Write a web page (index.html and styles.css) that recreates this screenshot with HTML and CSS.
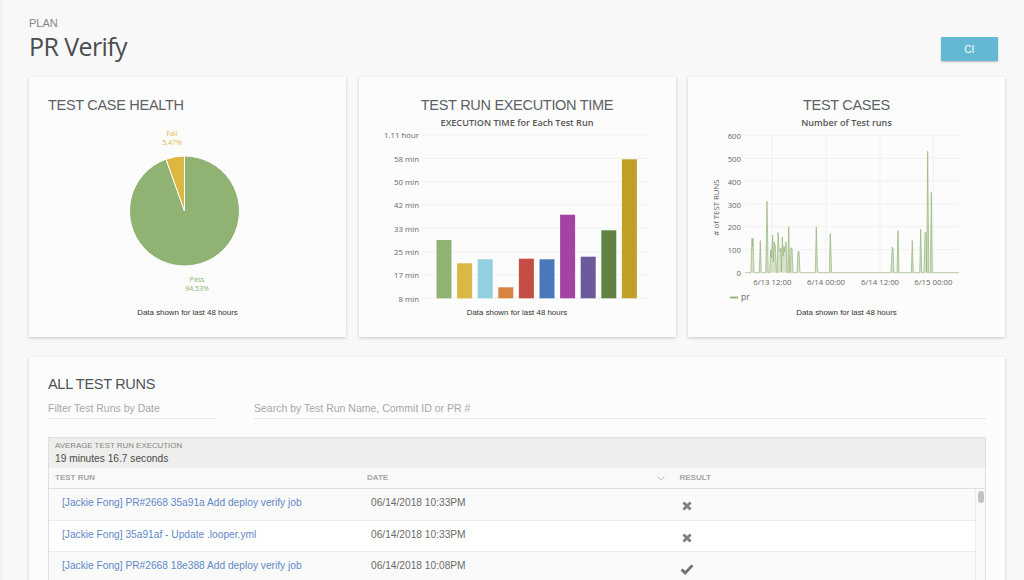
FILE: index.html
```html
<!DOCTYPE html>
<html lang="en">
<head>
<meta charset="utf-8">
<title>PR Verify</title>
<link rel="stylesheet" href="styles.css">
</head>
<body>
<main class="page">
  <header class="page-head">
    <div class="head-text">
      <div class="eyebrow">PLAN</div>
      <h1 class="page-title">PR Verify</h1>
    </div>
    <button class="ci-btn" type="button">CI</button>
  </header>

  <section class="chart-row">
    <article class="card">
      <h2 class="card-title card-title-left">TEST CASE HEALTH</h2>
      <svg class="chart" viewBox="29 115 317 190" width="317" height="190">
        <text class="pie-label fail" x="172" y="135.5">Fail</text>
        <text class="pie-label fail" x="172" y="144.5">5.47%</text>
        <path d="M184.5 211 L184.5 156 A55 55 0 1 1 166 159.2 Z" fill="#90b272" stroke="#fff" stroke-width="1"/>
        <path d="M184.5 211 L166 159.2 A55 55 0 0 1 184.5 156 Z" fill="#ddb743" stroke="#fff" stroke-width="1"/>
        <text class="pie-label pass" x="197" y="282">Pass</text>
        <text class="pie-label pass" x="197" y="291">94.53%</text>
      </svg>
      <p class="caption">Data shown for last 48 hours</p>
    </article>

    <article class="card">
      <h2 class="card-title">TEST RUN EXECUTION TIME</h2>
      <svg class="chart" viewBox="359 115 317 190" width="317" height="190">
        <text class="chart-sub" x="517" y="126">EXECUTION TIME for Each Test Run</text>
        <g class="grid">
          <path d="M422 135H650M422 158.3H650M422 181.7H650M422 205H650M422 228.3H650M422 251.7H650M422 275H650M422 298.3H650"/>
        </g>
        <g class="axis-y">
          <text x="419" y="138">1.11 hour</text>
          <text x="419" y="161.5">58 min</text>
          <text x="419" y="185">50 min</text>
          <text x="419" y="208">42 min</text>
          <text x="419" y="231.5">33 min</text>
          <text x="419" y="255">25 min</text>
          <text x="419" y="278">17 min</text>
          <text x="419" y="301.5">8 min</text>
        </g>
        <g class="bars">
          <rect x="436.5" y="240" width="15" height="58.3" fill="#90b272"/>
          <rect x="457.1" y="263.3" width="15" height="35" fill="#ddb743"/>
          <rect x="477.7" y="259.3" width="15" height="39" fill="#92cfdf"/>
          <rect x="498.3" y="287.3" width="15" height="11" fill="#d98341"/>
          <rect x="518.9" y="258.7" width="15" height="39.6" fill="#c44e45"/>
          <rect x="539.5" y="259.3" width="15" height="39" fill="#4a78bd"/>
          <rect x="560.1" y="214.7" width="15" height="83.6" fill="#a344a3"/>
          <rect x="580.7" y="256.7" width="15" height="41.6" fill="#6b5b9a"/>
          <rect x="601.3" y="230.3" width="15" height="68" fill="#618245"/>
          <rect x="621.9" y="159.3" width="15" height="139" fill="#bfa024"/>
        </g>
      </svg>
      <p class="caption">Data shown for last 48 hours</p>
    </article>

    <article class="card">
      <h2 class="card-title">TEST CASES</h2>
      <svg class="chart" viewBox="688 115 317 190" width="317" height="190">
        <text class="chart-sub" x="846.5" y="126">Number of Test runs</text>
        <g class="grid">
          <path d="M745 135.3H959M745 158.3H959M745 181H959M745 204H959M745 226.7H959M745 249.7H959M772.3 135V272.7M826 135V272.7M880 135V272.7M933.3 135V272.7"/>
        </g>
        <g class="axis-y">
          <text x="741" y="138.5">600</text>
          <text x="741" y="161.5">500</text>
          <text x="741" y="184.5">400</text>
          <text x="741" y="207.5">300</text>
          <text x="741" y="230">200</text>
          <text x="741" y="253">100</text>
          <text x="741" y="276">0</text>
        </g>
        <text class="axis-title" transform="translate(719 207.5) rotate(-90)">
          # of TEST RUNS
        </text>
        <polyline class="spikes" points="745,272.7 750.8,272.7 752,238.3 752.4,246.4 753,238.5 754,272.7 759.3,272.7 760.3,240.6 761.3,272.7 765.8,272.7 767,201.2 768.2,272.7 769.8,272.7 770.7,249.8 771.4,258 772.6,234.9 773.4,262 774,241.8 775.3,245.2 776.4,272.7 777.2,272.7 778,232.6 779.3,250.9 780.2,252 780.9,248 781.4,272 782.3,237.2 783.2,256 783.9,246.4 784.7,252 786,241.8 787.2,272.7 787.8,272.7 788.7,226.9 789.8,272.7 790.2,272.7 791,248 792,248 793,272.7 797,272.7 798,251.6 799,251.6 800,272.7 815.3,272.7 816.3,226.9 817.4,268 818.4,272.7 829.3,272.7 830.3,233.8 831.6,272.7 891,272.7 892.3,247 893,248.7 894,272.7 897,272.7 898,230.8 899,272.7 911.3,272.7 912.3,240.6 913.3,272.7 919.7,272.7 920.7,229.2 921.7,272.7 924,272.7 925,232.6 926.2,232.6 926.6,272.7 927.7,151.3 928.8,272.7 930.3,272.7 931.3,192.5 932.3,272.7 959,272.7"/>
        <g class="axis-x">
          <text x="772.3" y="285">6/13 12:00</text>
          <text x="826" y="285">6/14 00:00</text>
          <text x="880" y="285">6/14 12:00</text>
          <text x="933.3" y="285">6/15 00:00</text>
        </g>
        <path class="legend-line" d="M730 297.5H738"/>
        <text class="legend-text" x="741" y="300">pr</text>
      </svg>
      <p class="caption">Data shown for last 48 hours</p>
    </article>
  </section>

  <section class="card runs">
    <h2 class="card-title card-title-left runs-title">ALL TEST RUNS</h2>
    <div class="filters">
      <div class="field field-date">Filter Test Runs by Date</div>
      <div class="field field-search">Search by Test Run Name, Commit ID or PR #</div>
    </div>
    <div class="table">
      <div class="avg">
        <div class="avg-label">AVERAGE TEST RUN EXECUTION</div>
        <div class="avg-value">19 minutes 16.7 seconds</div>
      </div>
      <div class="thead">
        <div class="th th-run">TEST RUN</div>
        <div class="th th-date">DATE
          <svg class="chevron" viewBox="0 0 8 5" width="8" height="5"><path d="M0.5 0.5L4 4L7.5 0.5"/></svg>
        </div>
        <div class="th th-result">RESULT</div>
      </div>
      <div class="tbody">
        <div class="rows">
          <div class="row">
            <a class="run-link" href="#">[Jackie Fong] PR#2668 35a91a Add deploy verify job</a>
            <span class="run-date">06/14/2018 10:33PM</span>
            <svg class="result" viewBox="0 0 14 14" width="14" height="14"><path class="icon-x" d="M3.4 3.4L10.6 10.6M10.6 3.4L3.4 10.6"/></svg>
          </div>
          <div class="row row-alt">
            <a class="run-link" href="#">[Jackie Fong] 35a91af - Update .looper.yml</a>
            <span class="run-date">06/14/2018 10:33PM</span>
            <svg class="result" viewBox="0 0 14 14" width="14" height="14"><path class="icon-x" d="M3.4 3.4L10.6 10.6M10.6 3.4L3.4 10.6"/></svg>
          </div>
          <div class="row">
            <a class="run-link" href="#">[Jackie Fong] PR#2668 18e388 Add deploy verify job</a>
            <span class="run-date">06/14/2018 10:08PM</span>
            <svg class="result" viewBox="0 0 14 14" width="14" height="14"><path class="icon-check" d="M1.6 7.4L5.2 11L12.4 3.4"/></svg>
          </div>
        </div>
        <div class="scrolltrack"><div class="scrollthumb"></div></div>
      </div>
    </div>
  </section>
</main>
</body>
</html>
```
FILE: styles.css
```css
* { box-sizing: border-box; }
html, body { margin: 0; height: 580px; overflow: hidden; }
body {
  background: #f8f8f8;
  border-left: 3px solid #eef0f8;
  font-family: "Liberation Sans", Arial, sans-serif;
  color: #4a4a4a;
}
.page { padding: 0 19px 0 26px; height: 580px; overflow: hidden; }

.page-head {
  height: 77px;
  display: flex;
  justify-content: space-between;
  padding: 17px 7px 0 0;
}
.eyebrow { font-size: 11px; line-height: 13px; color: #858585; }
.page-title {
  margin: 2px 0 0;
  font: 400 25px/29px "Open Sans", sans-serif;
  letter-spacing: -0.6px;
  color: #4b4d4f;
}
.ci-btn {
  width: 57.5px;
  height: 24px;
  margin-top: 20px;
  padding: 0;
  border: 0;
  border-radius: 1px;
  background: #63b8d3;
  color: #fff;
  font: 400 10px "Liberation Sans", sans-serif;
  box-shadow: 0 1px 2px rgba(0, 0, 0, 0.25);
}

.chart-row { display: flex; gap: 12.5px; }
.card {
  background: #fcfcfc;
  box-shadow: 0 1px 3px rgba(0, 0, 0, 0.2);
}
.chart-row .card {
  flex: 1 1 0;
  height: 260px;
  padding-top: 17.5px;
}
.card-title {
  margin: 0;
  height: 20px;
  font: 400 14.5px/20px "Liberation Sans", sans-serif;
  letter-spacing: -0.3px;
  text-align: center;
  color: #5c6166;
}
.card-title-left { text-align: left; padding-left: 19px; }
.chart { display: block; }
.caption {
  margin: 2.5px 0 0;
  font-size: 7.9px;
  line-height: 12px;
  text-align: center;
  color: #333;
}

.pie-label { font: 400 7px "Open Sans", sans-serif; text-anchor: middle; }
.fail { fill: #ddb743; }
.pass { fill: #90b272; }
.chart-sub {
  font: 600 9.1px "Open Sans", sans-serif;
  text-anchor: middle;
  fill: #555;
}
.grid path { stroke: #f1f1f1; stroke-width: 1; fill: none; }
.axis-y text {
  font: 400 7.8px "Open Sans", sans-serif;
  text-anchor: end;
  fill: #666;
}
.axis-x text {
  font: 400 7.8px "Open Sans", sans-serif;
  text-anchor: middle;
  fill: #666;
}
.axis-title {
  font: 400 7.8px "Open Sans", sans-serif;
  text-anchor: middle;
  fill: #666;
}
.spikes {
  fill: #90b272;
  fill-opacity: 0.35;
  stroke: #90b272;
  stroke-opacity: 0.75;
  stroke-width: 0.9;
}
.legend-line { stroke: #90b272; stroke-width: 1.8; fill: none; }
.legend-text { font: 400 8.5px "Open Sans", sans-serif; fill: #666; }

.runs {
  margin-top: 20px;
  padding: 17px 19px 0;
  height: 240px;
}
.runs-title { padding-left: 0; color: #4f5357; }
.filters { display: flex; gap: 39px; margin-top: 4px; }
.field {
  height: 21px;
  font-size: 10.5px;
  line-height: 20px;
  color: #a8a8a8;
  border-bottom: 1px solid #e6e6e6;
}
.field-date { width: 167px; }
.field-search { flex: 1; }

.table {
  margin-top: 18px;
  border: 1px solid #dedede;
  border-bottom: 0;
}
.avg {
  height: 30px;
  padding: 2px 0 0 6px;
  background: #eeeeec;
}
.avg-label { font-size: 7.9px; line-height: 11px; color: #858585; }
.avg-value { font-size: 10.2px; line-height: 15px; color: #4a4a4a; }
.thead {
  display: grid;
  grid-template-columns: 318px 312.5px 1fr;
  height: 21px;
  border-bottom: 1px solid #dedede;
  background: #f9f9f9;
  font-size: 8px;
  font-weight: 700;
  line-height: 20px;
  color: #a6a6a6;
}
.th-run { padding-left: 6px; }
.th-date { position: relative; }
.chevron {
  position: absolute;
  right: 15px;
  top: 8px;
}
.chevron path { fill: none; stroke: #b5b5b5; stroke-width: 0.9; }

.tbody { display: flex; }
.rows { flex: 1; }
.row {
  display: grid;
  grid-template-columns: 318px 312.5px 1fr;
  height: 31.5px;
  padding-top: 7px;
  background: #fafafa;
  border-bottom: 1px solid #ececec;
  font-size: 10.2px;
  line-height: 14px;
}
.row-alt { background: #fff; }
.run-link { padding-left: 13px; color: #5f88c6; text-decoration: none; }
.run-date { padding-left: 4px; color: #6b6b6b; }
.result { margin: 3px 0 0 0; }
.icon-x { fill: none; stroke: #808080; stroke-width: 2.8; }
.icon-check { fill: none; stroke: #707070; stroke-width: 2.8; }
.scrolltrack {
  width: 10px;
  padding: 2px 2px 0;
  background: #fafafa;
  border-left: 1px solid #ececec;
}
.scrollthumb {
  width: 6px;
  height: 12px;
  border-radius: 3px;
  background: #c2c2c2;
}
```
